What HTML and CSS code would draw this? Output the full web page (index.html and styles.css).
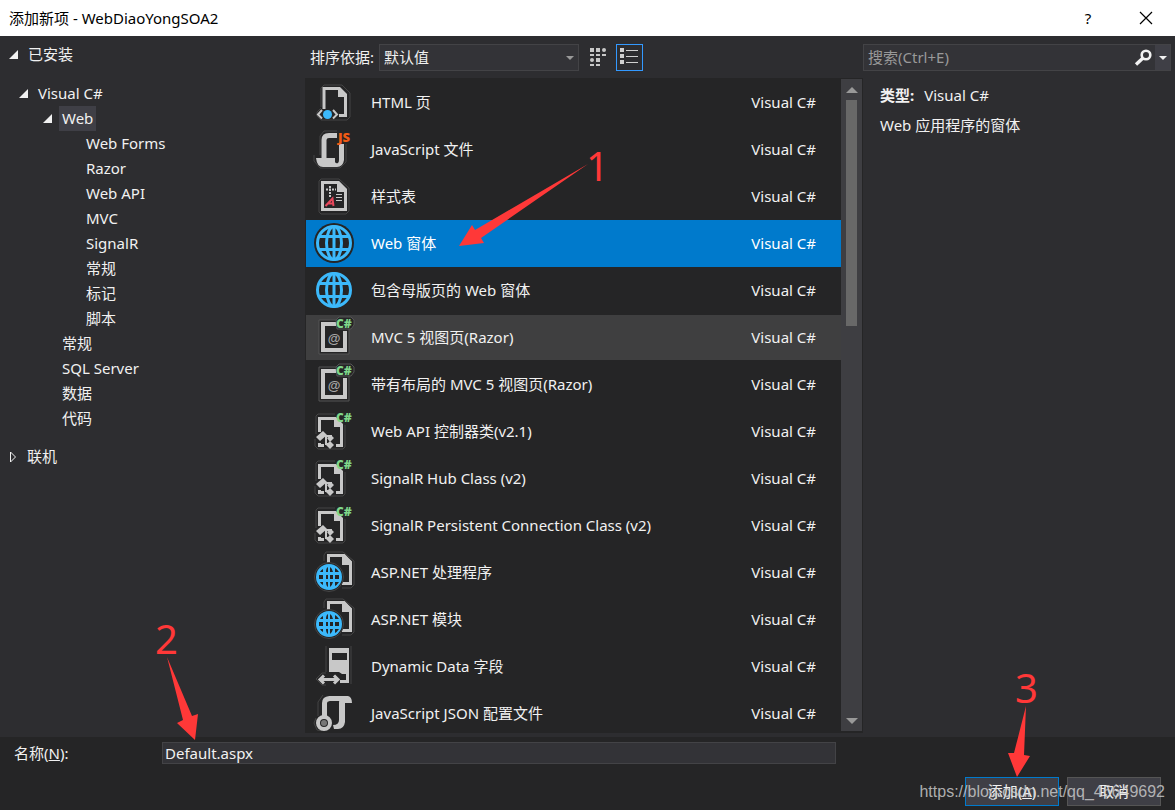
FILE: index.html
```html
<!DOCTYPE html>
<html lang="zh-CN">
<head>
<meta charset="utf-8">
<title>添加新项 - WebDiaoYongSOA2</title>
<link rel="stylesheet" href="styles.css">
</head>
<body>
<svg class="defs" aria-hidden="true">
  <symbol id="i-html" viewBox="0 0 60 47">
    <path class="halo" d="M15 28V9l3-3h18l8 8v24l-3 3H15l-4-4v-4l4-4"/>
    <path class="ln" d="M18 30V9.500H34M39.500 15V36.500H33"/>
    <path class="fl" d="M32 8h2l7 7v3h-9z"/>
    <path class="ln2" d="M16 31l-4 4.500 4 4M27 31l4 4.500-4 4"/>
    <circle class="cy" cx="21.500" cy="35.500" r="4.500"/>
  </symbol>
  <symbol id="i-js" viewBox="0 0 60 47">
    <path class="halo" d="M14 29V10l4-5h13M8 29v6l6 7h20l6-6V18"/>
    <path class="ln5" d="M18 32V14q0-4.500 5-4.500H31"/>
    <path class="fl" d="M10 32h19v4q1 2 3 1 1-1 1-3V18h5v16q-1 7-7 7H17q-6 0-7-9z"/>
    <text class="js" x="32" y="16">JS</text>
  </symbol>
  <symbol id="i-css" viewBox="0 0 60 47">
    <path class="halo" d="M13 8l2-2h18l10 9v23l-3 3H15l-2-2z"/>
    <path class="ln" d="M16.500 9.500H32L39.500 17V36.500H16.500z"/>
    <path class="fl" d="M31 8h2l8 8v3H31z"/>
    <path class="dash" d="M20 16.500h10M24 13v11"/>
    <path class="ln1" d="M30 21.500h6M30 24.500h6M30 27.500h6"/>
    <path class="redln" d="M19.500 33L26.500 25.500 27.500 33M22 30.500h5"/>
  </symbol>
  <symbol id="globe" viewBox="-20 -20 40 40">
    <circle r="20" fill="#252526"/>
    <g fill="none" stroke="#3cb9fb" stroke-width="3">
      <circle r="16.500"/><ellipse rx="7.500" ry="16.500"/>
      <path d="M0-16V16M-15-6.500H15M-15 6.500H15"/>
    </g>
  </symbol>
  <symbol id="i-form" viewBox="0 0 60 47"><use href="#globe" x="8" y="3" width="40" height="40"/></symbol>
  <symbol id="i-mvc" viewBox="0 0 60 47">
    <path class="base" d="M13 6h30v34H13z"/>
    <path class="ln4" d="M30 10H17v26h22V17"/>
    <text class="at" x="28" y="29">@</text>
    <path class="base" d="M30 6l3-3h12l3 3v5l-3 4H31z"/>
    <text class="cs" x="30" y="14">C#</text>
  </symbol>
  <symbol id="i-class" viewBox="0 0 60 47">
    <path class="halo" d="M10 26V8l2-2h17M39 17v22l-2 2H12l-3-3v-7"/>
    <path class="ln" d="M13.500 24V10.500H28M35.500 18V37.500H30M13.500 35v2.500H18"/>
    <path class="fl" d="M28 9h2l7 7v3h-9z"/>
    <path class="fl" d="M10 29l7-6 4 4-7 6zM21 30l4-3 3 3-4 4zM20 37l4-4 4 4-4 4z"/>
    <path class="ln2" d="M19 28h7M20 29v7h3"/>
    <text class="cs" x="30" y="14">C#</text>
  </symbol>
  <symbol id="i-aspnet" viewBox="0 0 60 47">
    <path class="halo" d="M18 12V6l2-3h17l11 9v24l-3 3H36"/>
    <path class="ln" d="M22.500 14V6.500H38L44.500 13V34.500H36"/>
    <path class="fl" d="M36 5h2l8 8v3H36z"/>
    <circle cx="23" cy="28" r="14.500" fill="#252526" stroke="#444"/>
    <circle cx="23" cy="28" r="13" fill="#3cb9fb"/>
    <path d="M14 23h3v-3q-2 1-3 3zm6 0h2v-5q-2 1-2 5zm4 0h3q-1-4-3-5zm5 0h4q-2-3-4-4zM13 26h4v4h-4zm7 0h2v4h-2zm4 0h3v4h-3zm5 0h4v4h-4zM14 33h3v3q-2-1-3-3zm6 0h2v5q-2-1-2-5zm4 0h3q-1 4-3 5zm5 0h4q-2 3-4 4z" fill="#252526"/>
  </symbol>
  <symbol id="i-data" viewBox="0 0 60 47">
    <path class="halo" d="M20 3v26M45 3v38M20 30h-4l-6 6 6 6h4"/>
    <path class="fl" fill-rule="evenodd" d="M23 5H43V40H34V37H40V31H36L33 29H23zM26 10v7h15v-7z"/>
    <path class="ln3" d="M18 32.500L14 36.500 18 40.500M15 36.500H31M28 32.500l4 4-4 4"/>
  </symbol>
  <symbol id="i-json" viewBox="0 0 60 47">
    <path class="halo" d="M12 26V12l5-7M10 28l-2 5 3 7 9 2"/>
    <path class="ln5" d="M18.500 27V13q0-4 5-4.500H41"/>
    <path class="fl" d="M36 6h6q4 1 4 7h-7v19q-1 7-7 7h-4l-1-4q6 0 6-5V13q0-5 3-7z"/>
    <circle cx="18" cy="33" r="6" fill="#252526" stroke="#c8c8c8" stroke-width="4"/>
    <circle cx="18" cy="33" r="3" fill="#777"/>
  </symbol>
</svg>

<div class="dialog">
  <header class="titlebar">
    <h1>添加新项 - WebDiaoYongSOA2</h1>
    <button class="cap" aria-label="帮助">?</button>
    <button class="cap" aria-label="关闭"><svg width="14" height="14" viewBox="0 0 14 14"><path d="M1 1l12 12M13 1L1 13" stroke="#000" stroke-width="1.200"/></svg></button>
  </header>

  <main class="body">
    <nav class="tree">
      <div class="node"><i class="open"></i>已安装</div>
      <ul class="lvl1">
        <li><div class="node"><i class="open"></i>Visual C#</div>
          <ul>
            <li><div class="node"><i class="open"></i><span class="current">Web</span></div>
              <ul>
                <li class="node">Web Forms</li>
                <li class="node">Razor</li>
                <li class="node">Web API</li>
                <li class="node">MVC</li>
                <li class="node">SignalR</li>
                <li class="node">常规</li>
                <li class="node">标记</li>
                <li class="node">脚本</li>
              </ul>
            </li>
            <li class="node">常规</li>
            <li class="node">SQL Server</li>
            <li class="node">数据</li>
            <li class="node">代码</li>
          </ul>
        </li>
      </ul>
      <div class="node"><svg class="closed" width="8" height="12" viewBox="0 0 8 12"><path d="M1.500 1v10l5-5z" fill="none" stroke="#f1f1f1"/></svg>联机</div>
    </nav>

    <section class="center">
      <div class="tools">
        <label for="sort">排序依据:</label>
        <span class="combo"><select id="sort"><option>默认值</option></select></span>
        <button class="view" aria-label="中等图标"><svg width="27" height="27" viewBox="0 0 27 27"><path fill="#c8c8c8" d="M6 4h4v4H6zM12 4h4v4h-4zM6 10h4v2H6zM12 10h4v2h-4zM18 10h4v2h-4zM12 14h4v4h-4zM6 20h4v2H6zM12 20h4v2h-4z"/><circle cx="20" cy="6" r="2" fill="#c8c8c8"/><circle cx="8" cy="16" r="2" fill="#c8c8c8"/></svg></button>
        <button class="view on" aria-label="小图标"><svg width="25" height="25" viewBox="0 0 25 25"><path fill="#d0d0d0" d="M3 3h4v4H3zM3 9h4v4H3zM3 15h4v4H3zM9 5h12v1H9zM9 11h12v1H9zM9 17h12v1H9z"/></svg></button>
      </div>
      <div class="listwrap">
        <ul class="list">
          <li><svg><use href="#i-html"/></svg><b>HTML 页</b><span>Visual C#</span></li>
          <li><svg><use href="#i-js"/></svg><b>JavaScript 文件</b><span>Visual C#</span></li>
          <li><svg><use href="#i-css"/></svg><b>样式表</b><span>Visual C#</span></li>
          <li class="selected"><svg><use href="#i-form"/></svg><b>Web 窗体</b><span>Visual C#</span></li>
          <li><svg><use href="#i-form"/></svg><b>包含母版页的 Web 窗体</b><span>Visual C#</span></li>
          <li class="hover"><svg><use href="#i-mvc"/></svg><b>MVC 5 视图页(Razor)</b><span>Visual C#</span></li>
          <li><svg><use href="#i-mvc"/></svg><b>带有布局的 MVC 5 视图页(Razor)</b><span>Visual C#</span></li>
          <li><svg><use href="#i-class"/></svg><b>Web API 控制器类(v2.1)</b><span>Visual C#</span></li>
          <li><svg><use href="#i-class"/></svg><b>SignalR Hub Class (v2)</b><span>Visual C#</span></li>
          <li><svg><use href="#i-class"/></svg><b>SignalR Persistent Connection Class (v2)</b><span>Visual C#</span></li>
          <li><svg><use href="#i-aspnet"/></svg><b>ASP.NET 处理程序</b><span>Visual C#</span></li>
          <li><svg><use href="#i-aspnet"/></svg><b>ASP.NET 模块</b><span>Visual C#</span></li>
          <li><svg><use href="#i-data"/></svg><b>Dynamic Data 字段</b><span>Visual C#</span></li>
          <li><svg><use href="#i-json"/></svg><b>JavaScript JSON 配置文件</b><span>Visual C#</span></li>
        </ul>
        <div class="scroll"><i class="up"></i><div class="track"><div class="thumb"></div></div><i class="down"></i></div>
      </div>
    </section>

    <aside class="side">
      <div class="search">
        <input type="text" placeholder="搜索(Ctrl+E)" aria-label="搜索">
        <button class="find" aria-label="查找"><svg width="18" height="18" viewBox="0 0 18 18"><circle cx="12" cy="6" r="4.300" fill="none" stroke="#f1f1f1" stroke-width="2.600"/><path d="M9 9l-7 6.500" stroke="#f1f1f1" stroke-width="3.400"/></svg></button>
        <button class="more" aria-label="搜索选项"><i></i></button>
      </div>
      <div class="info">
        <p><strong>类型:</strong><span>Visual C#</span></p>
        <p>Web 应用程序的窗体</p>
      </div>
    </aside>
  </main>

  <footer class="footer">
    <div class="name"><label for="name">名称(<u>N</u>):</label><input id="name" type="text" value="Default.aspx"></div>
    <div class="actions"><button class="primary">添加(<u>A</u>)</button><button>取消</button></div>
  </footer>

  <svg class="notes" width="1175" height="810" viewBox="0 0 1175 810" aria-hidden="true">
    <path d="M588 164L475 230l-3-5-13 21 25-3-3-5zM167 657l16 63-6 3 18 17 3-26-6 2zM1026 706l-12 47h-6l9 24 13-21-6-1z"/>
    <text x="586" y="181">1</text><text x="155" y="654">2</text><text x="1015" y="703">3</text>
  </svg>
  <div class="watermark">https://blog.csdn.net/qq_46649692</div>
</div>
</body>
</html>
```

FILE: styles.css
```css
* { box-sizing: border-box; }
body {
  margin: 0;
  background: #2d2d30;
  color: #f1f1f1;
  font: 15px/25px "Noto Sans", "Noto Sans CJK SC", sans-serif;
}
ul, p, h1 { margin: 0; padding: 0; list-style: none; }
button, input, select { font: inherit; color: inherit; margin: 0; border-radius: 0; }
button { padding: 0; border: 0; background: none; }
.defs { position: absolute; width: 0; height: 0; }

.dialog {
  position: relative;
  display: flex;
  flex-direction: column;
  height: 100vh;
  overflow: hidden;
}
.titlebar {
  display: flex;
  align-items: center;
  height: 36px;
  padding-left: 9px;
  background: #fff;
  color: #000;
}
.titlebar h1 { flex: 1; font-size: 15px; font-weight: 400; }
.cap { width: 58px; height: 36px; display: grid; place-items: center; }

.body { flex: 1; min-height: 0; display: flex; }

.tree { width: 305px; padding: 6px 9px; }
.node { display: flex; align-items: center; height: 25px; }
.lvl1 { padding: 14px 0 13px 10px; }
.tree ul ul { padding-left: 24px; }
.tree ul ul > li.node { padding-left: 19px; }
.open {
  width: 9px;
  height: 9px;
  margin-right: 10px;
  background: #f1f1f1;
  clip-path: polygon(100% 0, 100% 100%, 0 100%);
}
.closed { margin-right: 10px; }
.current { padding: 0 3px; margin-left: -3px; background: #3f3f46; }

.center { flex: 1; min-width: 0; display: flex; flex-direction: column; padding-bottom: 4px; }
.tools { display: flex; align-items: center; height: 42px; padding-left: 5px; }
.tools label { width: 64px; white-space: nowrap; }
.combo { position: relative; width: 200px; margin: 0 5px; }
.combo::after {
  content: "";
  position: absolute;
  right: 5px;
  top: 12px;
  border: 4px solid transparent;
  border-top-color: #999;
  border-bottom: 0;
}
.combo select {
  display: block;
  width: 100%;
  height: 27px;
  padding: 0 4px;
  appearance: none;
  background: #333337;
  border: 1px solid #434346;
}
.view { width: 27px; height: 27px; margin-right: 5px; display: grid; place-items: center; }
.view.on { border: 1px solid #3399ff; }

.listwrap { flex: 1; min-height: 0; display: flex; background: #252526; padding: 1px 1px 2px; }
.list { flex: 1; min-width: 0; overflow: hidden; }
.list li { display: flex; align-items: center; height: 47px; padding-right: 25px; }
.list svg { width: 60px; height: 47px; margin-right: 5px; flex: none; }
.list b { flex: 1; font-weight: 400; }
.list .selected { background: #007acc; color: #fff; }
.list .hover { background: #3f3f40; border: 1px solid #252526; border-width: 1px 0; }
.scroll {
  width: 21px;
  display: flex;
  flex-direction: column;
  align-items: center;
  background: #3e3e42;
}
.up, .down { border: 6px solid transparent; }
.up { margin: 8px 0 7px; border-top: 0; border-bottom-color: #999; }
.down { margin: 6px 0 7px; border-bottom: 0; border-top-color: #999; }
.track { flex: 1; width: 11px; }
.thumb { height: 37%; background: #686868; }

.side { width: 312px; padding: 8px 4px 0 0; }
.search { display: flex; height: 27px; background: #333337; border: 1px solid #434346; }
.search input { flex: 1; min-width: 0; padding: 0 4px; border: 0; background: none; outline: 0; }
.search input::placeholder { color: #999; opacity: 1; }
.find { width: 24px; display: grid; place-items: center; }
.more { width: 15px; background: #3f3f46; display: grid; place-items: center; }
.more i { border: 4px solid transparent; border-top-color: #f1f1f1; border-bottom: 0; }
.info { padding: 12px 17px; display: grid; gap: 5px; }
.info span { margin-left: 10px; }

.footer { height: 73px; padding: 5px 14px 4px; background: #252526; }
.name { display: flex; align-items: center; height: 22px; }
.name label { width: 148px; }
.name input {
  flex: 1;
  height: 22px;
  margin-right: 325px;
  padding: 0 2px;
  background: #333337;
  border: 1px solid #434346;
}
.actions { display: flex; justify-content: flex-end; gap: 8px; margin-top: 13px; }
.actions button { width: 94px; height: 29px; background: #3f3f46; border: 1px solid #555; }
.actions .primary { border-color: #007acc; }

.notes { position: absolute; left: 0; top: 0; pointer-events: none; fill: #ff3838; }
.notes text { font-size: 40px; }
.watermark {
  position: absolute;
  right: 10px;
  bottom: 6px;
  font: 16px/25px "Liberation Sans", Arial, sans-serif;
  color: rgba(210, 210, 210, 0.8);
  pointer-events: none;
}

.halo { fill: none; stroke: #444; stroke-width: 1; }
.base { fill: #252526; stroke: #555; stroke-width: 1; }
.fl { fill: #c8c8c8; }
.ln, .ln1, .ln2, .ln3, .ln4, .ln5, .dash { fill: none; stroke: #c8c8c8; stroke-width: 3; }
.ln1 { stroke-width: 1; }
.ln2 { stroke-width: 2; }
.ln4 { stroke-width: 4; }
.ln5 { stroke-width: 5; }
.dash { stroke-width: 2; stroke-dasharray: 2 1; }
.redln { fill: none; stroke: #e8485c; stroke-width: 2; }
.cy { fill: #3cb9fb; }
.js, .cs { font: 800 13px "Open Sans", sans-serif; fill: #f05a14; }
.cs { font-size: 12px; fill: #7fd68a; }
.at { font: 700 13px "Liberation Sans", sans-serif; fill: #a8a8a8; text-anchor: middle; }
```
